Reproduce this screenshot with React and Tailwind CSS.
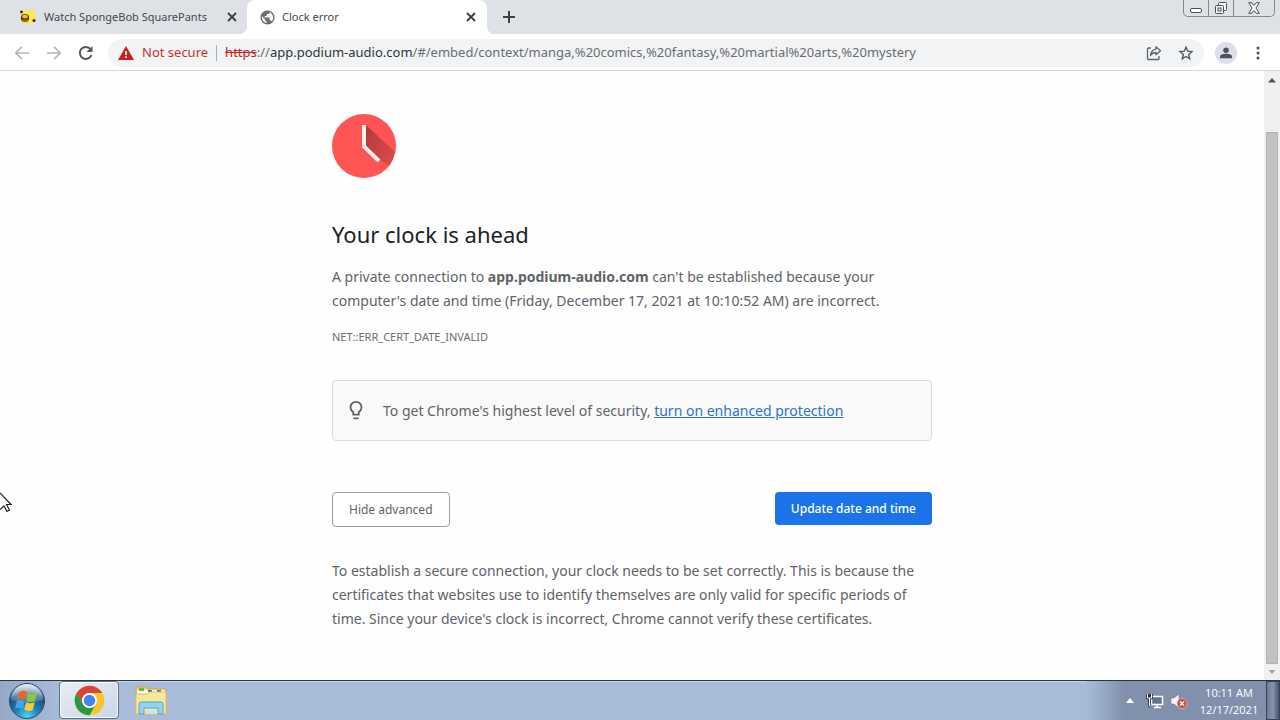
import React from "react";

const ICON_BTN = "flex size-7 shrink-0 items-center justify-center";

function Close() {
  return (
    <svg viewBox="0 0 10 10" className="size-[10px]" stroke="#3c4043" strokeWidth="1.800" fill="none">
      <path d="M1 1l8 8M9 1l-8 8" />
    </svg>
  );
}

function SpongeIcon() {
  return (
    <svg viewBox="0 0 18 16" className="h-4 w-[18px] shrink-0">
      <path d="M1 2l14-1 2 12-13 2z" fill="#fbe94e" />
      <circle cx="2.500" cy="3" r="1.400" fill="#3a2d0c" />
      <ellipse cx="6" cy="9" rx="4.200" ry="4" fill="#5b430f" />
      <ellipse cx="6" cy="7.600" rx="2.800" ry="1.800" fill="#f3c331" />
      <path d="M3 11q3 2 6 0" stroke="#c58a1d" fill="none" />
      <circle cx="15" cy="11.500" r="1.600" fill="#4a3608" />
    </svg>
  );
}

function TabStrip() {
  return (
    <header className="flex h-[34px] shrink-0 items-stretch bg-[#dee1e6] text-[11px] text-[#45494d]">
      <div className="flex w-[247px] shrink-0 items-center pr-[10px] pl-[19px]">
        <SpongeIcon />
        <span className="ml-[7px] flex-1 whitespace-nowrap">
          Watch SpongeBob SquarePants
        </span>
        <button aria-label="Close tab" className="ml-2 shrink-0">
          <Close />
        </button>
      </div>
      <div className="relative flex w-60 shrink-0 items-center rounded-t-lg bg-white pr-[11px] pl-3 before:absolute before:bottom-0 before:-left-2 before:size-2 before:bg-[radial-gradient(circle_at_0_0,#dee1e6_8px,white_8px)] after:absolute after:-right-2 after:bottom-0 after:size-2 after:bg-[radial-gradient(circle_at_100%_0,#dee1e6_8px,white_8px)]">
        <svg viewBox="0 0 24 24" className="size-[17px] shrink-0" fill="#6b6f74">
          <path d="M12 2a10 10 0 100 20 10 10 0 000-20zm-1 17.900A8 8 0 014.200 10.200L9 15v1a2 2 0 002 2zm6.900-2.500A2 2 0 0016 16h-1v-3a1 1 0 00-1-1H8v-2h2a1 1 0 001-1V7h2a2 2 0 002-2v-.4a8 8 0 012.900 12.800z" />
        </svg>
        <span className="ml-[6px] flex-1">Clock error</span>
        <button aria-label="Close tab">
          <Close />
        </button>
      </div>
      <button aria-label="New tab" className="ml-2 flex w-7 items-center justify-center">
        <svg viewBox="0 0 12 12" className="size-3" stroke="#3c4043" strokeWidth="2">
          <path d="M6 0v12M0 6h12" />
        </svg>
      </button>
      <div className="mr-[5px] ml-auto flex h-[17px] rounded-b-[5px] border border-t-0 border-[#84898f]">
        <button aria-label="Minimize" className="flex w-[25px] items-end justify-center border-r border-[#84898f] pb-[3px]">
          <svg viewBox="0 0 12 5" className="h-[5px] w-3" fill="#fff" stroke="#4a4e54">
            <rect x=".5" y=".5" width="11" height="4" rx="1.500" />
          </svg>
        </button>
        <button aria-label="Restore" className="flex w-[25px] items-center justify-center border-r border-[#84898f]">
          <svg viewBox="0 0 14 14" className="size-[14px]" fill="#f4f5f7" stroke="#4a4e54">
            <rect x="4.500" y="1.500" width="8" height="8" rx="1" />
            <rect x="1.500" y="4.500" width="8" height="8" rx="1" />
            <rect x="4" y="7" width="3" height="3" />
          </svg>
        </button>
        <button aria-label="Close" className="flex w-[40px] items-center justify-center">
          <svg viewBox="0 0 12 12" className="size-3" fill="#fff" stroke="#4a4e54" strokeLinejoin="round">
            <path d="M.7.7h3L6 3.500 8.300.7h3L7.900 6l3.400 5.300h-3L6 8.500l-2.300 2.800h-3L4.100 6z" />
          </svg>
        </button>
      </div>
    </header>
  );
}

function Toolbar() {
  return (
    <nav className="flex h-[37px] shrink-0 items-center border-b border-[#d5d7da] bg-white px-2 pt-px">
      <button aria-label="Back" className={ICON_BTN}>
        <svg viewBox="0 0 16 16" className="size-4" fill="none" stroke="#b4b7ba" strokeWidth="1.700">
          <path d="M15 8H2M8 1.800L1.800 8 8 14.200" />
        </svg>
      </button>
      <button aria-label="Forward" className="ml-1 flex size-7 shrink-0 items-center justify-center">
        <svg viewBox="0 0 16 16" className="size-4" fill="none" stroke="#b4b7ba" strokeWidth="1.700">
          <path d="M1 8h13M8 1.800L14.200 8 8 14.200" />
        </svg>
      </button>
      <button aria-label="Reload" className="ml-1 flex size-7 shrink-0 items-center justify-center">
        <svg viewBox="0 0 16 16" className="size-4" fill="none" stroke="#54585c" strokeWidth="2">
          <path d="M13.500 10A6 6 0 1112.600 4.200" />
          <path d="M14.500 1v6h-6z" fill="#54585c" stroke="none" />
        </svg>
      </button>
      <div className="ml-2 flex h-7 min-w-0 flex-1 items-center rounded-full bg-[#f1f3f4] pr-1 pl-[10px] text-[13px]">
        <svg viewBox="0 0 16 14" className="h-[14px] w-4 shrink-0">
          <path d="M8 0l8 14H0z" fill="#c5221f" />
          <path d="M7.200 5h1.600v4H7.200zM7.200 10.300h1.600v1.600H7.200z" fill="#fff" />
        </svg>
        <span className="ml-2 whitespace-nowrap text-[#c5322f]">Not secure</span>
        <span className="mx-2 h-4 w-px shrink-0 bg-[#a9acb0]" />
        <div className="flex-1 truncate text-[#6a6e73]">
          <span className="text-[#c5221f] line-through">https</span>://<span className="text-[#303438]">app.podium-audio.com</span>
          /#/embed/context/manga,%20comics,%20fantasy,%20martial%20arts,%20mystery
        </div>
        <button aria-label="Share" className={ICON_BTN}>
          <svg viewBox="0 0 16 16" className="size-4" fill="none" stroke="#5f6368" strokeWidth="1.300" strokeLinejoin="round">
            <path d="M5 3H2.500A1 1 0 001.500 4v9.500a1 1 0 001 1H12a1 1 0 001-1V11" />
            <path d="M10 1.800l4.500 4L10 9.800V7.500C7.500 7.500 5.800 8.500 4.500 10.500 5 7 6.800 4.500 10 4.100z" />
          </svg>
        </button>
        <button aria-label="Bookmark" className="ml-1 flex size-7 shrink-0 items-center justify-center">
          <svg viewBox="0 0 16 16" className="size-4" fill="none" stroke="#54585c" strokeWidth="1.400">
            <path d="M8 2.200l1.700 4 4.300.4-3.300 2.900 1 4.300L8 11.500l-3.700 2.300 1-4.300L2 6.600l4.300-.4z" />
          </svg>
        </button>
      </div>
      <button aria-label="Profile" className="ml-[11px] flex size-[22px] items-center justify-center rounded-full bg-[#dcdfe8]">
        <svg viewBox="0 0 14 14" className="size-3" fill="#4d5261">
          <circle cx="7" cy="3.800" r="3.200" />
          <path d="M0 13v-2c0-2 4-3 7-3s7 1 7 3v2z" />
        </svg>
      </button>
      <button aria-label="Menu" className="ml-[7px] flex h-7 w-7 items-center justify-center">
        <svg viewBox="0 0 4 16" className="h-4 w-1" fill="#4d5156">
          <circle cx="2" cy="3" r="1.500" />
          <circle cx="2" cy="8" r="1.500" />
          <circle cx="2" cy="13" r="1.500" />
        </svg>
      </button>
    </nav>
  );
}

function ErrorPage() {
  return (
    <main className="min-w-0 flex-1 overflow-hidden pt-[43px] text-sm leading-6 text-[#5f6368]">
      <div className="mx-auto max-w-[600px]">
        <svg viewBox="0 0 64 64" className="size-16">
          <defs>
            <linearGradient id="hand-shadow" x2="1" y2="1">
              <stop offset="0" stopColor="#b03a3c" />
              <stop offset="1" stopColor="#e04c4c" />
            </linearGradient>
          </defs>
          <circle cx="32" cy="32" r="32" fill="#ff5454" />
          <path d="M34 11L62.500 37.500A32 32 0 0157 52L48 46 34 32z" fill="url(#hand-shadow)" />
          <path d="M32 11v21.500L47 47" fill="none" stroke="#fff2ec" strokeWidth="4" />
        </svg>
        <h1 className="mt-10 text-[22px] leading-8 text-[#202124]">Your clock is ahead</h1>
        <p className="mt-[15px]">
          A private connection to <b>app.podium-audio.com</b> can't be established because your computer's date and time (Friday, December 17, 2021 at 10:10:52 AM) are incorrect.
        </p>
        <p className="mt-3 text-[11px] text-[#6a6e73]">NET::ERR_CERT_DATE_INVALID</p>
        <div className="mt-[31px] flex items-center rounded border border-[#dadce0] bg-[#fafafa] pt-[18px] pr-4 pb-[17px] pl-3">
          <svg viewBox="0 0 24 26" className="h-6 w-[22px] shrink-0" fill="#5f6368">
            <path d="M9 21c0 .5.400 1 1 1h4c.6 0 1-.5 1-1v-1H9v1zm3-19C8.100 2 5 5.100 5 9c0 2.400 1.200 4.500 3 5.700V17c0 .5.400 1 1 1h6c.6 0 1-.5 1-1v-2.300c1.800-1.300 3-3.400 3-5.700 0-3.900-3.100-7-7-7zm2.900 11.100l-.9.600V16h-4v-2.300l-.9-.6A5 5 0 017 9a5 5 0 0110 0c0 1.600-.8 3.200-2.100 4.100z" />
          </svg>
          <p className="ml-4">
            To get Chrome's highest level of security,{" "}
            <a href="#protection" className="text-[#2b72cf] underline">turn on enhanced protection</a>
          </p>
        </div>
        <div className="mt-[51px] flex items-start justify-between text-xs leading-[19px]">
          <button className="rounded border border-[#9a9da1] bg-white px-4 py-[7px] text-[#5f6368]">Hide advanced</button>
          <button className="rounded bg-[#1a73e8] px-4 py-[7px] font-medium text-white">Update date and time</button>
        </div>
        <p className="mt-8">
          To establish a secure connection, your clock needs to be set correctly. This is because the certificates that websites use to identify themselves are only valid for specific periods of time. Since your device's clock is incorrect, Chrome cannot verify these certificates.
        </p>
      </div>
    </main>
  );
}

function Scrollbar() {
  return (
    <div className="flex w-4 shrink-0 flex-col items-center bg-[#f0f0f1]">
      <svg viewBox="0 0 16 16" className="mt-px size-4 shrink-0" fill="#505050">
        <path d="M8 6l4 4.500H4z" />
      </svg>
      <div className="mt-11 w-3 flex-1 border border-[#b5b5b5] bg-[#c1c1c1]" />
      <svg viewBox="0 0 16 16" className="size-4 shrink-0" fill="#a3a3a3">
        <path d="M8 10L4.500 6h7z" />
      </svg>
    </div>
  );
}

function StartOrb() {
  return (
    <svg viewBox="0 0 38 38" className="size-[38px]">
      <defs>
        <radialGradient id="orb" cx=".5" cy=".95" r=".9">
          <stop offset="0" stopColor="#4fd6f5" />
          <stop offset=".4" stopColor="#1c7db6" />
          <stop offset=".75" stopColor="#1d4f7c" />
          <stop offset="1" stopColor="#8fa9c0" />
        </radialGradient>
        <linearGradient id="gloss" x2="0" y2="1">
          <stop offset="0" stopColor="#fff" stopOpacity=".75" />
          <stop offset="1" stopColor="#fff" stopOpacity=".12" />
        </linearGradient>
      </defs>
      <circle cx="19" cy="19" r="17.500" fill="url(#orb)" stroke="#2d4a69" />
      <path d="M3 18a16 16 0 0132 0q-16 5-32 0z" fill="url(#gloss)" />
      <path d="M11.500 10Q15 7.500 19 10l-2 8q-4-2.500-7.800-.5z" fill="#f0622d" />
      <path d="M20.300 10.800q4 2.500 8.700.2l-2 8q-4.500 2-8.500-.3z" fill="#8cc63f" />
      <path d="M8.900 19q4-2 7.800.5l-2 7.500q-3.500-2.200-7.700-.5z" fill="#42a5e8" />
      <path d="M18.200 20q4 2.300 8.500.3l-2 7.700q-4.500 2-8.500-.5z" fill="#fdc933" />
    </svg>
  );
}

function ChromeLogo() {
  return (
    <svg viewBox="0 0 48 48" className="size-[31px]">
      <circle cx="24" cy="24" r="23" fill="#f7c52d" />
      <path d="M4.100 12.500A23 23 0 0143.900 12.500H24A11.500 11.500 0 0014 29.700z" fill="#dc4236" />
      <path d="M4.100 12.500A23 23 0 0024 47l10-17.300A11.500 11.500 0 0114 29.700z" fill="#279847" />
      <circle cx="24" cy="24" r="11.500" fill="#fff" />
      <circle cx="24" cy="24" r="9" fill="#4285f4" />
    </svg>
  );
}

function FolderIcon() {
  return (
    <svg viewBox="0 0 34 32" className="h-8 w-[34px]">
      <path d="M2 2h10l2 2h18v25H2z" fill="#e8d07a" stroke="#c7ab4e" />
      <path d="M3 5h28v6H3z" fill="#fdf9dc" />
      <path d="M5 3h5v3H5z" fill="#63b94c" />
      <path d="M14 5h4v2h-4zM23 5h4v2h-4z" fill="#60757a" />
      <path d="M2 9h12l2-2h16v22H2z" fill="#f8e69a" stroke="#dcc36a" />
      <path d="M5 29V19q0-2 2-2h20q2 0 2 2v10h-5v-6H10v6z" fill="#93d3f0" stroke="#54a5cf" />
      <path d="M12 25h10v4H12z" fill="#c5e6ef" />
    </svg>
  );
}

function Taskbar() {
  return (
    <footer className="flex h-10 shrink-0 items-stretch border-t border-[#27364d] bg-[#a8bcd9] shadow-[inset_0_1px_0_#c7d5e8]">
      <button aria-label="Start" className="flex w-[59px] items-center justify-center bg-linear-to-r from-[#94a8c8] to-[#a8bcd9] pr-[5px]">
        <StartOrb />
      </button>
      <button aria-label="Google Chrome" className="mb-px flex w-[60px] items-center justify-center rounded-sm border border-[#5d6d86] bg-linear-to-br from-[#e9eef5] to-[#cbd5e4] shadow-[inset_0_0_0_1px_#f7f9fc]">
        <ChromeLogo />
      </button>
      <button aria-label="File Explorer" className="ml-[2px] flex w-[60px] items-center justify-center">
        <FolderIcon />
      </button>
      <div className="ml-auto flex items-center bg-linear-to-r from-[#a8bcd9] to-[#8191ac] to-20% pl-10">
        <button aria-label="Show hidden icons">
          <svg viewBox="0 0 8 5" className="h-[5px] w-2" fill="#fff">
            <path d="M4 0l4 5H0z" />
          </svg>
        </button>
        <svg viewBox="0 0 18 16" className="ml-3 h-4 w-[18px]">
          <rect x="5.500" y="3.500" width="11" height="8" fill="#63738d" stroke="#fff" strokeWidth="1.500" />
          <path d="M8 14.500h7M11 12v2" stroke="#fff" strokeWidth="1.500" />
          <path d="M1.500 1v4h4V1M3.500 5v8h2M3.500 1v3" stroke="#22304a" strokeWidth="2.500" fill="none" />
          <path d="M1.500 1v4h4V1M3.500 5v8h2" stroke="#fff" fill="none" />
        </svg>
        <svg viewBox="0 0 18 16" className="ml-[6px] h-4 w-[18px]">
          <path d="M1 5h3l5-4v14l-5-4H1z" fill="#f4f6f9" stroke="#6e7c93" strokeWidth=".6" />
          <circle cx="12" cy="10.500" r="5" fill="#d3473e" stroke="#f4cfcb" strokeWidth=".6" />
          <path d="M10 8.500l4 4M14 8.500l-4 4" stroke="#fff" strokeWidth="1.500" />
        </svg>
        <div className="ml-[11px] w-[60px] text-center font-['Open_Sans',sans-serif] text-[11px] leading-[17px] whitespace-nowrap text-white">
          <div>10:11 AM</div>
          <div>12/17/2021</div>
        </div>
        <button aria-label="Show desktop" className="ml-[7px] w-[14px] self-stretch border border-[#34435c] bg-linear-to-r from-[#6e7b91] via-[#8793a8] to-[#46536b]" />
      </div>
    </footer>
  );
}

export default function App() {
  return (
    <div className="relative flex h-screen flex-col overflow-hidden bg-[#fefefe] font-['Noto_Sans','Open_Sans',sans-serif]">
      <TabStrip />
      <Toolbar />
      <div className="flex min-h-0 flex-1">
        <ErrorPage />
        <Scrollbar />
      </div>
      <Taskbar />
      <svg viewBox="0 0 13 21" className="absolute top-[492px] left-0 h-[21px] w-[13px]">
        <path d="M0 1l11 11.500H6.500L9.500 18l-2.500 1.500L4 14l-4 3.500" fill="#fff" stroke="#222" strokeWidth="1.200" />
      </svg>
    </div>
  );
}
